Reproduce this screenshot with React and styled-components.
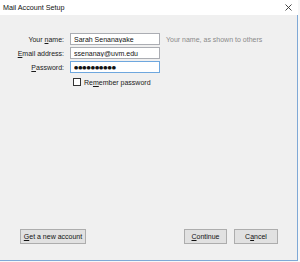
import React from 'react';
import styled, { createGlobalStyle } from 'styled-components';

const GlobalStyle = createGlobalStyle`
    html, body {
        margin: 0;
        padding: 0;
        background: #f7f7f7;
    }
    body {
        font-family: "Liberation Sans", Arial, sans-serif;
        font-size: 7px;
        color: #1a1a1a;
    }
`;

function Mn({ children }) {
    return <u>{children}</u>;
}

function App() {
    return (
        <>
            <GlobalStyle />
            <Window>
                <TitleBar>
                    <span>Mail Account Setup</span>
                    <CloseIcon width="7" height="7" viewBox="0 0 7 7">
                        <path d="M0.5 0.5 L6.5 6.5 M6.5 0.5 L0.5 6.5" stroke="#333" strokeWidth="0.9" />
                    </CloseIcon>
                </TitleBar>
                <Body>
                    <Form>
                        <Label>Your <Mn>n</Mn>ame:</Label>
                        <Field defaultValue="Sarah Senanayake" readOnly />
                        <Hint>Your name, as shown to others</Hint>

                        <Label><Mn>E</Mn>mail address:</Label>
                        <Field defaultValue="ssenanay@uvm.edu" readOnly />
                        <span />

                        <Label><Mn>P</Mn>assword:</Label>
                        <Field defaultValue={'\u25CF'.repeat(10)} readOnly $focused />
                        <span />

                        <CheckRow>
                            <Box />
                            <span>Re<Mn>m</Mn>ember password</span>
                        </CheckRow>
                    </Form>
                    <ButtonBar>
                        <Button>
                            <Mn>G</Mn>et a new account
                        </Button>
                        <ButtonGroup>
                            <Button $w={43}><Mn>C</Mn>ontinue</Button>
                            <Button $w={44}>C<Mn>a</Mn>ncel</Button>
                        </ButtonGroup>
                    </ButtonBar>
                </Body>
            </Window>
        </>
    );
}

const Window = styled.div`
    width: 298px;
    height: 261px;
    display: flex;
    flex-direction: column;
    box-sizing: border-box;
`;

const TitleBar = styled.div`
    height: 15px;
    flex: none;
    background: #fff;
    display: flex;
    align-items: center;
    justify-content: space-between;
    padding: 0 6px 0 3px;
    font-size: 7.2px;
    color: #111;
`;

const CloseIcon = styled.svg`
    display: block;
`;

const Body = styled.div`
    flex: 1;
    background: #f0f0f0;
    border-right: 1px solid #7fa9d6;
    border-bottom: 1px solid #7fa9d6;
    display: flex;
    flex-direction: column;
    justify-content: space-between;
`;

const Form = styled.div`
    display: grid;
    grid-template-columns: 64px 90px auto;
    column-gap: 6px;
    row-gap: 2px;
    align-items: center;
    padding-top: 18px;
`;

const Label = styled.label`
    text-align: right;
    white-space: nowrap;
`;

const Field = styled.input`
    box-sizing: border-box;
    height: 12px;
    width: 90px;
    margin: 0;
    padding: 0 3px;
    border: 1px solid ${(p) => (p.$focused ? '#6ea7de' : '#abadb3')};
    background: #fff;
    font-family: ${(p) => (p.$focused ? '"DejaVu Sans", sans-serif' : '"Liberation Sans", Arial, sans-serif')};
    font-size: ${(p) => (p.$focused ? '4.8px' : '7px')};
    color: #111;
    outline: none;
`;

const Hint = styled.span`
    color: #8a8a8a;
    white-space: nowrap;
`;

const CheckRow = styled.div`
    grid-column: 2 / span 2;
    display: flex;
    align-items: center;
    gap: 3px;
    padding-left: 3px;
    margin-top: 3px;
    white-space: nowrap;
`;

const Box = styled.span`
    display: block;
    width: 8px;
    height: 8px;
    box-sizing: border-box;
    border: 1px solid #333;
    background: #fff;
`;

const ButtonBar = styled.div`
    display: flex;
    justify-content: space-between;
    align-items: center;
    padding: 0 19px 16px 20px;
`;

const ButtonGroup = styled.div`
    display: flex;
    gap: 7px;
`;

const Button = styled.button`
    box-sizing: border-box;
    height: 15px;
    width: ${(p) => (p.$w ? `${p.$w}px` : '66px')};
    margin: 0;
    padding: 0;
    border: 1px solid #adadad;
    background: #e1e1e1;
    font-family: "Liberation Sans", Arial, sans-serif;
    font-size: 7px;
    color: #111;
    white-space: nowrap;
`;

export default App;
